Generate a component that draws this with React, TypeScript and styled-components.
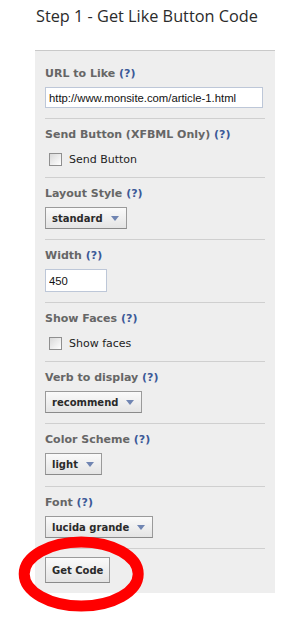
import React from "react";
import styled, { createGlobalStyle } from "styled-components";

const Global = createGlobalStyle`
  html, body { margin: 0; padding: 0; background: #ffffff; }
  body { font-family: "DejaVu Sans", Verdana, sans-serif; }
`;

const Page = styled.div`
  position: relative;
  width: 304px;
  height: 627px;
  padding: 5px 0 0 35px;
  box-sizing: border-box;
`;

const Heading = styled.h1`
  margin: 0;
  font-family: "Open Sans", "Liberation Sans", sans-serif;
  font-weight: 400;
  font-size: 16.3px;
  line-height: 22px;
  color: #2b2b2b;
  padding-left: 1px;
`;

const Panel = styled.div`
  margin-top: 23px;
  width: 240px;
  box-sizing: border-box;
  background: #eeeeee;
  border-top: 1px solid #c9c9c9;
  padding: 7px 10px 0 10px;
`;

const Section = styled.div<{ $first?: boolean; $button?: boolean; $pb?: number }>`
  border-top: ${(p) => (p.$first ? "none" : "1px solid #cfcfcf")};
  padding: ${(p) => (p.$button ? "8px 0 10px" : `9px 0 ${p.$pb ?? 10}px`)};
  display: flex;
  flex-direction: column;
  align-items: flex-start;
`;

const Label = styled.div<{ $check?: boolean }>`
  font-family: "DejaVu Sans", Verdana, sans-serif;
  font-weight: 700;
  font-size: 11px;
  line-height: 14px;
  color: #666666;
  margin-bottom: ${(p) => (p.$check ? "9px" : "6px")};
  white-space: nowrap;
`;

const Help = styled.span`
  color: #3b5998;
`;

const TextInput = styled.input<{ $w: number; $h: number }>`
  width: ${(p) => p.$w}px;
  height: ${(p) => p.$h}px;
  box-sizing: border-box;
  border: 1px solid #bdc7d8;
  background: #ffffff;
  padding: 0 3px;
  margin: 0;
  font-family: "Liberation Sans", Arial, sans-serif;
  font-size: 11.3px;
  color: #111111;
  outline: none;
`;

const CheckRow = styled.label`
  display: flex;
  align-items: center;
  height: 16px;
  padding-left: 4px;
  gap: 7px;
  font-family: "DejaVu Sans", Verdana, sans-serif;
  font-size: 11px;
  color: #222222;
`;

const Box = styled.input`
  appearance: none;
  -webkit-appearance: none;
  width: 13px;
  height: 13px;
  margin: 0;
  box-sizing: border-box;
  border: 1px solid #8f8f8f;
  background: linear-gradient(135deg, #d9d9d9 0%, #f4f4f4 70%, #ffffff 100%);
`;

const GrayButton = styled.button<{ $tall?: boolean }>`
  display: inline-flex;
  align-items: center;
  gap: 8px;
  height: ${(p) => (p.$tall ? "26px" : "22px")};
  box-sizing: border-box;
  margin: 0;
  padding: ${(p) => (p.$tall ? "0 6px 0 6px" : "0 7px 0 6px")};
  border: 1px solid #9a9a9a;
  border-bottom-color: #8a8a8a;
  background: linear-gradient(#fafafa, #e4e4e4);
  font-family: "DejaVu Sans", Verdana, sans-serif;
  font-weight: 700;
  font-size: 10px;
  color: #2a2a2a;
  cursor: pointer;
`;

const Arrow = styled.span`
  display: inline-block;
  width: 0;
  height: 0;
  border-left: 4.5px solid transparent;
  border-right: 4.5px solid transparent;
  border-top: 5px solid #7085b2;
  margin-top: 1px;
`;

const Ring = styled.svg`
  position: absolute;
  left: 0;
  top: 0;
  pointer-events: none;
`;

const Dropdown = ({ value }: { value: string }) => (
  <GrayButton>
    {value}
    <Arrow />
  </GrayButton>
);

const Title = ({ text }: { text: string }) => (
  <>
    {text} <Help>(?)</Help>
  </>
);

export default function App() {
  return (
    <>
      <Global />
      <Page>
        <Heading>Step 1 - Get Like Button Code</Heading>
        <Panel>
          <Section $first>
            <Label>
              <Title text="URL to Like" />
            </Label>
            <TextInput $w={218} $h={21} defaultValue="http://www.monsite.com/article-1.html" />
          </Section>
          <Section>
            <Label $check>
              <Title text="Send Button (XFBML Only)" />
            </Label>
            <CheckRow>
              <Box type="checkbox" />
              Send Button
            </CheckRow>
          </Section>
          <Section>
            <Label>
              <Title text="Layout Style" />
            </Label>
            <Dropdown value="standard" />
          </Section>
          <Section>
            <Label>
              <Title text="Width" />
            </Label>
            <TextInput $w={62} $h={23} defaultValue="450" />
          </Section>
          <Section>
            <Label $check>
              <Title text="Show Faces" />
            </Label>
            <CheckRow>
              <Box type="checkbox" />
              Show faces
            </CheckRow>
          </Section>
          <Section>
            <Label>
              <Title text="Verb to display" />
            </Label>
            <Dropdown value="recommend" />
          </Section>
          <Section $pb={11}>
            <Label>
              <Title text="Color Scheme" />
            </Label>
            <Dropdown value="light" />
          </Section>
          <Section>
            <Label>
              <Title text="Font" />
            </Label>
            <Dropdown value="lucida grande" />
          </Section>
          <Section $button>
            <GrayButton $tall>Get Code</GrayButton>
          </Section>
        </Panel>
        <Ring width="304" height="627" viewBox="0 0 304 627">
          <ellipse cx="81.2" cy="574" rx="57" ry="32" fill="none" stroke="#ff0000" strokeWidth="11" />
        </Ring>
      </Page>
    </>
  );
}
